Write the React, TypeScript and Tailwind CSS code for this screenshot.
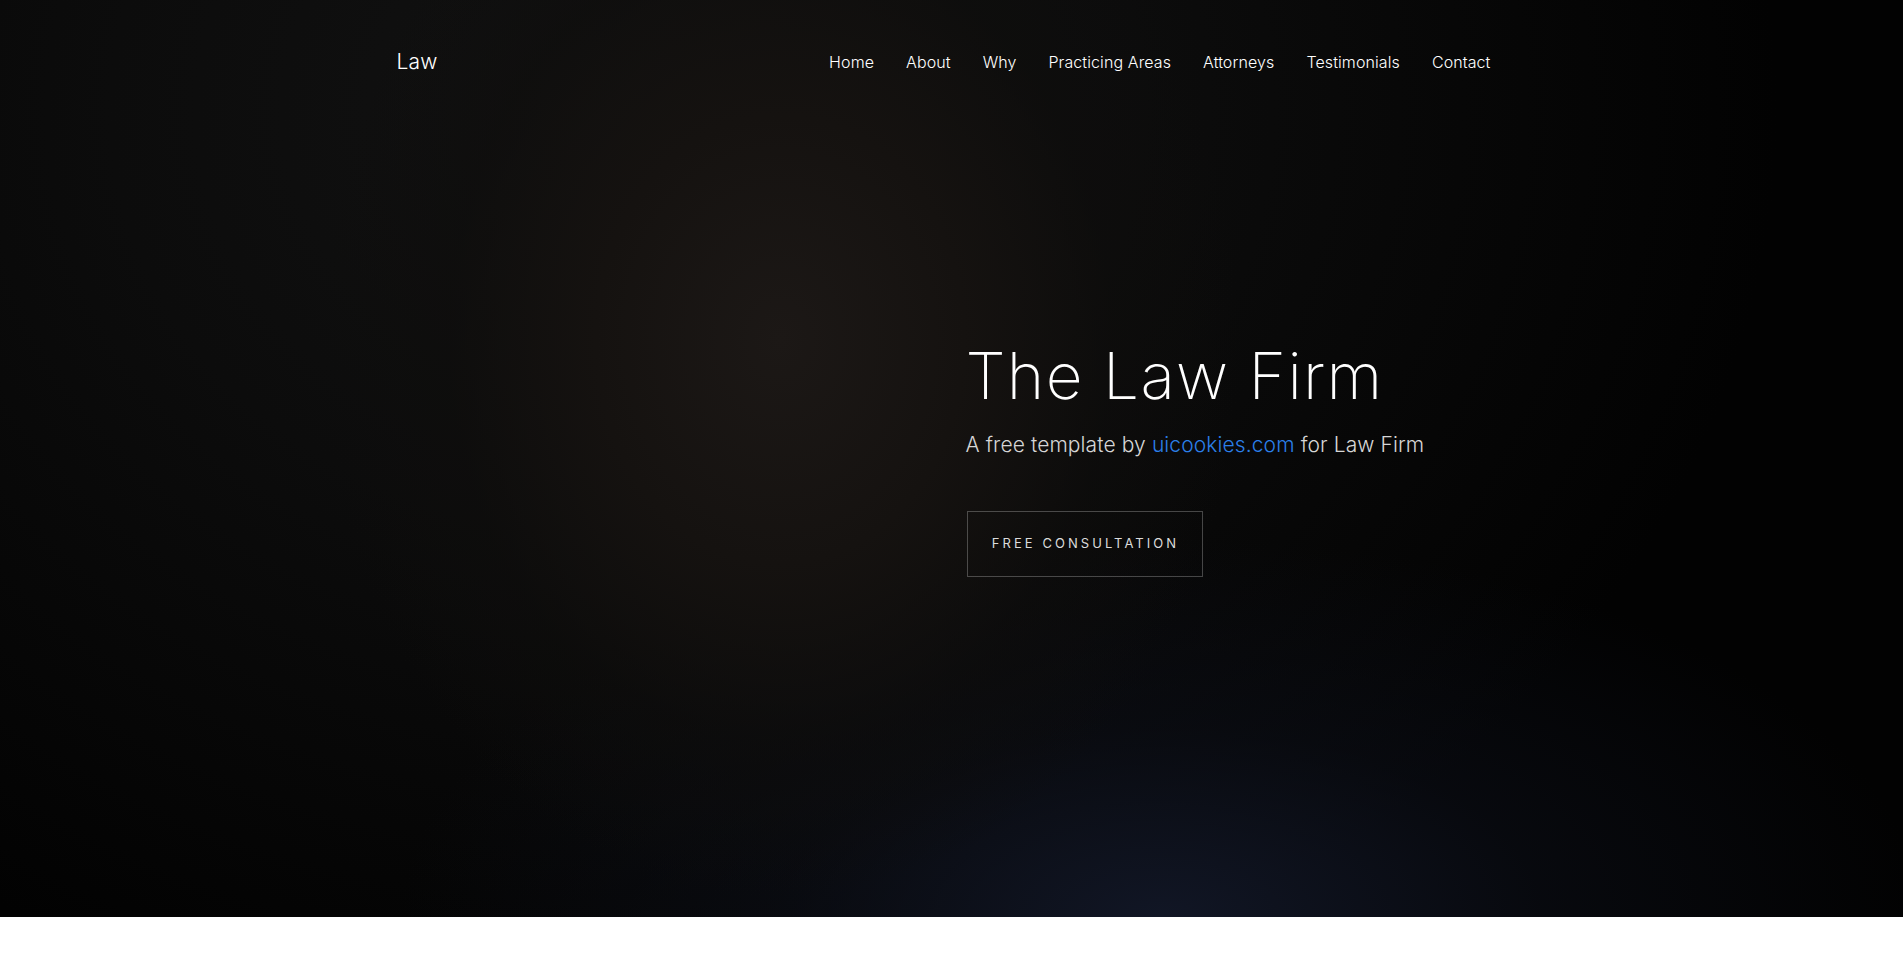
import React from 'react'

const navItems = ['Home', 'About', 'Why', 'Practicing Areas', 'Attorneys', 'Testimonials', 'Contact']

export default function App() {
  return (
    <div className="min-h-screen bg-white font-['Inter','Liberation_Sans',sans-serif]">
      <section className="h-[917px] flex flex-col bg-[#020202] bg-[radial-gradient(ellipse_460px_560px_at_41%_37%,#1c1816_0%,#151210_40%,rgba(14,13,12,0.6)_72%,transparent_100%),radial-gradient(ellipse_760px_380px_at_61%_100%,#111625_0%,rgba(12,15,24,0.55)_50%,transparent_100%),radial-gradient(ellipse_1150px_950px_at_33%_12%,#121212_0%,#0c0c0c_45%,transparent_100%)]">
        <header className="h-[124px] shrink-0">
          <div className="w-[1110px] mx-auto h-full flex items-center justify-between">
            <a href="#" className="text-[21px] font-light text-white tracking-[0.01em]">
              Law
            </a>
            <nav className="flex items-center">
              {navItems.map((item) => (
                <a key={item} href="#" className="px-4 text-[16px] font-light tracking-[0.006em] text-white">
                  {item}
                </a>
              ))}
            </nav>
          </div>
        </header>

        <div className="w-[1110px] mx-auto grid grid-cols-2 pt-[214px]">
          <div />
          <div className="pl-[14px]">
            <h1 className="text-[64px] leading-[1.2] font-extralight text-white tracking-[0.02em]">
              The Law Firm
            </h1>
            <p className="mt-[15px] text-[21px] leading-[1.43] font-light tracking-[0.005em] text-[#d6d6d6]">
              A free template by{' '}
              <a href="#" className="text-[#2b7fe8]">
                uicookies.com
              </a>{' '}
              for Law Firm
            </p>
            <a
              href="#"
              className="mt-[51px] ml-[1px] w-[236px] h-[66px] flex items-center justify-center pl-[2px] border border-white/25 text-[13px] uppercase tracking-[0.235em] text-[#dcdcdc]"
            >
              Free Consultation
            </a>
          </div>
        </div>
      </section>
      <div className="h-[48px]" />
    </div>
  )
}
